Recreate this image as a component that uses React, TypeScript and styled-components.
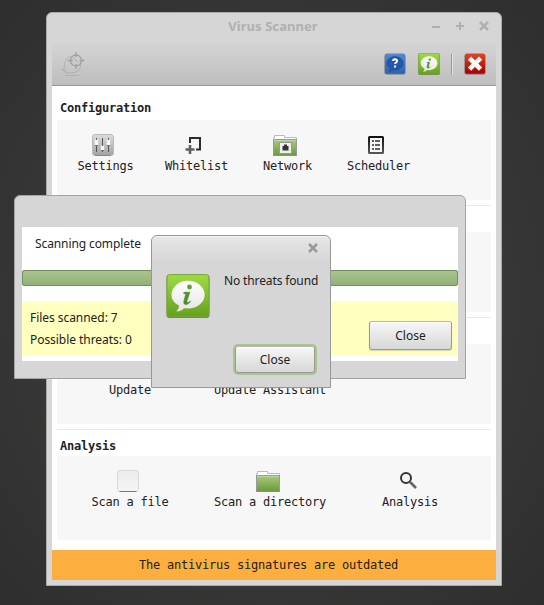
import React from 'react';
import styled, { createGlobalStyle } from 'styled-components';

const GlobalStyle = createGlobalStyle`
  * { box-sizing: border-box; }
  body { margin: 0; color: #222; background: #333; overflow: hidden; }
  svg { display: block; flex: none; }
`;

const Desktop = styled.main`
  position: relative;
  width: 544px;
  height: 605px;
  padding: 12px 0 0 46px;
  background: radial-gradient(ellipse at 50% 50%, #3c3c3b 35%, #2e2e2e 100%);
`;

const Window = styled.section`
  display: flex;
  flex-direction: column;
  width: 456px;
  height: 574px;
  padding: 0 5px 5px;
  border: 1px solid #aaa;
  border-radius: 6px 6px 0 0;
  background: #d6d6d6;
`;

const TitleBar = styled.header`
  display: grid;
  grid-template-columns: 77px 1fr 79px;
  align-items: center;
  height: 28px;
  padding-bottom: 2px;
  color: #b0b0b0;
`;

const WindowTitle = styled.h1`
  grid-column: 2;
  margin: 0;
  text-align: center;
  font: bold 13px/20px 'Noto Sans', sans-serif;
  letter-spacing: 0.06px;
`;

const WindowControls = styled.div`
  display: flex;
  gap: 12px;
  padding-left: 13px;
`;

const Toolbar = styled.div`
  display: flex;
  align-items: center;
  height: 45px;
  padding: 2px 10px 0 8px;
  border-bottom: 1px solid #999;
  background: linear-gradient(#d6d6d6, #d3d3d3 10%, #bebebe);
`;

const ToolbarActions = styled.div`
  display: flex;
  align-items: center;
  gap: 12px;
  margin-left: auto;
`;

const Separator = styled.i`
  width: 2px;
  height: 21px;
  border-left: 1px solid #999;
  background: #e2e2e2;
  margin: 0 -1px 0 -1px;
`;

const Content = styled.div`
  flex: 1;
  padding: 7px 5px 0;
  background: #fff;
`;

const Section = styled.section<{ $last?: boolean }>`
  height: ${p => (p.$last ? 111 : 107)}px;
  margin-bottom: 5px;
  & + & { box-shadow: 0 1px 0 #e9e9e9 inset; }
`;

const SectionTitle = styled.h2<{ $low?: boolean }>`
  height: 27px;
  margin: 0;
  padding: ${p => (p.$low ? 7 : 5)}px 0 0 3px;
  font: bold 12px/20px 'DejaVu Sans Mono', monospace;
  letter-spacing: -0.224px;
`;

const Panel = styled.div<{ $columns: number; $tall?: boolean }>`
  display: grid;
  grid-template-columns: repeat(${p => p.$columns}, ${p => (p.$columns === 4 ? 91 : 140)}px);
  height: ${p => (p.$tall ? 84 : 80)}px;
  padding: 13px 3px 0;
  background: #f7f7f7;
`;

const Launcher = styled.div`
  display: flex;
  flex-direction: column;
  align-items: center;
  gap: 1px;
  font: 12px/16px 'DejaVu Sans Mono', monospace;
  letter-spacing: -0.224px;
  white-space: nowrap;
  svg { margin-right: 5px; }
`;

const StatusBar = styled.footer`
  display: flex;
  align-items: center;
  height: 30px;
  padding-left: 87px;
  background: #fcae3e;
  font: 12px/16px 'DejaVu Sans Mono', monospace;
  letter-spacing: -0.224px;
`;

const ScanDialog = styled.section`
  position: absolute;
  left: 14px;
  top: 195px;
  width: 452px;
  height: 184px;
  padding: 31px 7px 17px;
  border: 1px solid #a3a3a3;
  border-radius: 6px 6px 0 0;
  background: #d6d6d6;
  font: 12px/22px 'Noto Sans', sans-serif;
  letter-spacing: -0.1px;
`;

const ScanBody = styled.div`
  height: 134px;
  background: #fff;
`;

const ScanStatus = styled.p`
  height: 43px;
  margin: 0;
  padding: 6px 13px 0;
`;

const Progress = styled.div`
  height: 16px;
  border: 1px solid #72905b;
  border-radius: 2px;
  background: linear-gradient(#a8c48d, #91b179);
`;

const Summary = styled.div`
  display: flex;
  justify-content: space-between;
  align-items: flex-start;
  height: 55px;
  margin-top: 15px;
  padding: 6px 6px 0 8px;
  background: #ffffbf;
  letter-spacing: -0.05px;
`;

const Button = styled.button<{ $focused?: boolean }>`
  width: ${p => (p.$focused ? 80 : 83)}px;
  height: ${p => (p.$focused ? 27 : 29)}px;
  padding: 0;
  border: 1px solid #999;
  border-radius: 3px;
  border-top-color: #b5b5b5;
  background: linear-gradient(#f7f7f7, #d7d7d7);
  box-shadow: ${p => (p.$focused ? '0 0 0 2px #a9c689, 0 1px 0 #fff inset' : '0 1px 1px #9996, 0 1px 0 #fff inset')};
  color: #222;
  font: 12px/20px 'Noto Sans', sans-serif;
`;

const ScanClose = styled.div`
  padding-top: 14px;
`;

const MessageDialog = styled.section`
  position: absolute;
  left: 151px;
  top: 235px;
  width: 180px;
  height: 153px;
  padding: 0 14px 14px;
  border: 1px solid #979797;
  border-radius: 6px 6px 0 0;
  background: linear-gradient(#e7e7e7, #d6d6d6 26px);
  box-shadow: 0 1px 0 #f5f5f5 inset;
  display: flex;
  flex-direction: column;
  font: 12px/20px 'Noto Sans', sans-serif;
  letter-spacing: -0.13px;
`;

const MessageBar = styled.div`
  display: flex;
  justify-content: flex-end;
  padding: 6px 0 0;
  margin-right: -3px;
  height: 38px;
  color: #999;
`;

const MessageContent = styled.div`
  display: flex;
  gap: 14px;
  align-items: flex-start;
  white-space: nowrap;
  span { margin-top: -3px; }
`;

const MessageActions = styled.div`
  display: flex;
  justify-content: flex-end;
  margin: auto 1px 0 0;
`;

type ControlKind = 'minimize' | 'maximize' | 'close';

const ControlIcon = ({ kind }: { kind: ControlKind }) => (
  <svg width="12" height="12" viewBox="0 0 12 12" fill="none" stroke="currentColor" strokeWidth="2">
    {kind === 'minimize' && <path d="M2 7h8" />}
    {kind === 'maximize' && <path d="M2 6h8M6 2v8" />}
    {kind === 'close' && <path strokeWidth="2.5" d="m2 2 8 8M10 2l-8 8" />}
  </svg>
);

const ScannerLogo = () => (
  <svg width="26" height="26" viewBox="0 0 26 26" fill="none" stroke="#a59f9f">
    <path strokeWidth=".8" stroke="#b0a9a9" d="M11 5.5C6.500 6 5 9 4.500 14L4 18.500M21 12.500c-.3 4-1.500 6.500-4 8-2.500 1.200-5.500 1.500-9 1.500L3 18l-1.500 1.200M5 24.500h14M3 19l4 4.500" />
    <circle cx="16" cy="9.500" r="5.500" strokeWidth="1.300" />
    <path strokeWidth="1.300" d="M16 1v5M16 13v5M7.500 9.500h5M19.500 9.500h5" />
    <path strokeWidth=".7" d="m13 7 5 4" />
  </svg>
);

const HelpIcon = () => (
  <svg width="22" height="22" viewBox="0 0 22 22">
    <defs><linearGradient id="blue" x2="0" y2="1"><stop stopColor="#5388d2" /><stop offset="1" stopColor="#2f62b0" /></linearGradient></defs>
    <rect x=".5" y="1" width="21" height="20.5" rx="2" fill="#69737f" />
    <rect x="1" y=".5" width="20" height="20" rx="2" fill="url(#blue)" />
    <path d="M6.5 15.2C4.4 14 3 12.2 3 10.2 3 6.4 6.6 3.7 11 3.7s8 2.7 8 6.5-3.6 6.6-8 6.6l-1.5-.1c-1.1.9-2.700 1.500-4.600 1.400 1.200-.7 1.700-1.600 1.600-2.900Z" fill="#2458a8" stroke="#1b498f" strokeWidth=".7" />
    <path d="M9.2 8V7Q9.8 6.2 11 6.2q2.1 0 2.1 1.7 0 1-1.1 1.6-.9.5-.9 1.6M11.1 12.6v2" fill="none" stroke="#fff" strokeWidth="1.9" />
  </svg>
);

const InfoIcon = ({ size, id }: { size: number; id: string }) => (
  <svg width={size} height={size} viewBox="0 0 44 44">
    <defs>
      <linearGradient id={id} x2="0" y2="1"><stop stopColor="#a0da44" /><stop offset="1" stopColor="#64a21b" /></linearGradient>
      <linearGradient id={`${id}-bubble`} x2="0" y2="1"><stop stopColor="#fff" /><stop offset="1" stopColor="#e5e5e5" /></linearGradient>
    </defs>
    <rect x=".5" y="1" width="43" height="43" rx="3" fill="#777c72" />
    <rect x="1" y=".6" width="42" height="42" rx="2.5" fill={`url(#${id})`} stroke="#75a83c" />
    <path d="M13 31.5C8 29 5.5 25 5.5 20.7c0-7.8 7.5-14 16.5-14s16.7 6.2 16.7 14S31 34.5 22 34.5l-4-.3c-2 2.4-5 3.400-8 3.100 2-1.200 3-3.200 3-5.800Z" fill={`url(#${id}-bubble)`} />
    <circle cx="23.5" cy="13" r="2.4" fill="#63a02d" />
    <path d="M18 18.3h5.8L21 26.600q-.6 2 .8 2 1.200 0 2.700-1.500-1.700 3.400-4.600 3.400-2.800 0-2-3.300l1.800-6.800q-.4-1-2-.8Z" fill="#508f27" stroke="#508f27" strokeWidth=".7" />
  </svg>
);

const QuitIcon = () => (
  <svg width="22" height="22" viewBox="0 0 22 22">
    <defs><linearGradient id="red" x2="0" y2="1"><stop stopColor="#e54420" /><stop offset="1" stopColor="#a80000" /></linearGradient></defs>
    <rect x=".5" y="1" width="21" height="20.5" rx="2" fill="#766" />
    <rect x="1" y=".5" width="20" height="20" rx="2" fill="url(#red)" />
    <path d="m5.500 5.200 11 11M16.500 5.200l-11 11" stroke="#fff" strokeWidth="4.6" />
  </svg>
);

const SettingsIcon = () => (
  <svg width="24" height="24" viewBox="0 0 24 24">
    <defs><linearGradient id="gray" x2="0" y2="1"><stop stopColor="#dcdcdc" /><stop offset="1" stopColor="#a2a2a2" /></linearGradient></defs>
    <rect x="1.5" y="1.5" width="21" height="21" rx="2.5" fill="url(#gray)" stroke="#bdbdbd" />
    <path d="M4 22.5h16" stroke="#888" />
    <path d="M5.500 5v14M11.500 5v14M17.500 5v14" stroke="#555" />
    <path d="M4 7h3v5H4zM10 13h3v4h-3zM16 7h3v5h-3z" fill="#fff" stroke="#eee" strokeWidth=".5" />
    <path d="M4 12.500h3M10 17.500h3M16 12.500h3" stroke="#777" />
  </svg>
);

const WhitelistIcon = () => (
  <svg width="24" height="24" viewBox="0 0 24 24" fill="none">
    <path d="M8 10V5H18V16.5H14" stroke="#2c2c2c" strokeWidth="2" />
    <path d="M8 12v9M3.5 16.5h9" stroke="#606060" strokeWidth="2.6" />
  </svg>
);

const FolderIcon = ({ id, network = false }: { id: string; network?: boolean }) => (
  <svg width="24" height="24" viewBox="0 0 24 24">
    <defs><linearGradient id={id} x2="0" y2="1"><stop stopColor="#a7cb7c" /><stop offset="1" stopColor="#6c993b" /></linearGradient></defs>
    <path d="M.5 22V4.500h1v-2h10v2h12V22" fill="#fff" stroke="#bbb" />
    <path d="M.5 6.500h23v16H.5z" fill={`url(#${id})`} stroke="#999" />
    <path d="M1.500 7.500h21" stroke="#bfd7a4" />
    <path d="M0 22.500h24" stroke="#8e8e8e" />
    {network && <g><path d="M6.500 9.500h12v11h-12z" fill="#eee" stroke="#999" /><path d="M9.500 17.500V13H11v-1.500h3V13h1.500v4.500z" fill="#333" /></g>}
  </svg>
);

const SchedulerIcon = () => (
  <svg width="24" height="24" viewBox="0 0 24 24" fill="none">
    <defs><linearGradient id="ink" x2="0" y2="1"><stop stopColor="#111" /><stop offset="1" stopColor="#555" /></linearGradient></defs>
    <rect x="5" y="4" width="14" height="16" rx=".5" fill="#f7f7f7" stroke="url(#ink)" strokeWidth="2" />
    <path d="M8 8h2M8 12h2M8 16h2M11 8h5M11 12h5M11 16h5" stroke="#333" strokeWidth="1.4" />
  </svg>
);

const FileIcon = () => (
  <svg width="24" height="24" viewBox="0 0 24 24">
    <defs><linearGradient id="paper" x2="0" y2="1"><stop stopColor="#ececec" /><stop offset="1" stopColor="#f5f5f5" /></linearGradient></defs>
    <rect x="1.500" y="1.500" width="21" height="21" rx="2.5" fill="url(#paper)" stroke="#d8d8d8" />
    <path d="M3.500 22.500h17" stroke="#777" />
  </svg>
);

const UpdateIcon = () => (
  <svg width="24" height="24" viewBox="0 0 24 24" fill="none" stroke="#444" strokeWidth="2">
    <path d="M12 4v12M7 11l5 5 5-5M5 19h14" />
  </svg>
);

const SearchIcon = () => (
  <svg width="24" height="24" viewBox="0 0 24 24" fill="none">
    <circle cx="10" cy="9" r="5" stroke="#333" strokeWidth="2" />
    <path d="m14 13 6 6" stroke="#666" strokeWidth="2.6" />
  </svg>
);

export default function App() {
  return (
    <>
      <GlobalStyle />
      <Desktop>
        <Window>
          <TitleBar>
            <WindowTitle>Virus Scanner</WindowTitle>
            <WindowControls>
              <ControlIcon kind="minimize" />
              <ControlIcon kind="maximize" />
              <ControlIcon kind="close" />
            </WindowControls>
          </TitleBar>
          <Toolbar>
            <ScannerLogo />
            <ToolbarActions>
              <HelpIcon />
              <InfoIcon size={22} id="toolbar-green" />
              <Separator />
              <QuitIcon />
            </ToolbarActions>
          </Toolbar>
          <Content>
            <Section>
              <SectionTitle>Configuration</SectionTitle>
              <Panel $columns={4}>
                <Launcher><SettingsIcon />Settings</Launcher>
                <Launcher><WhitelistIcon />Whitelist</Launcher>
                <Launcher><FolderIcon id="network-folder" network />Network</Launcher>
                <Launcher><SchedulerIcon />Scheduler</Launcher>
              </Panel>
            </Section>
            <Section>
              <SectionTitle />
              <Panel $columns={3} />
            </Section>
            <Section>
              <SectionTitle />
              <Panel $columns={3}>
                <Launcher><UpdateIcon />Update</Launcher>
                <Launcher><UpdateIcon />Update Assistant</Launcher>
              </Panel>
            </Section>
            <Section $last>
              <SectionTitle $low>Analysis</SectionTitle>
              <Panel $columns={3} $tall>
                <Launcher><FileIcon />Scan a file</Launcher>
                <Launcher><FolderIcon id="scan-folder" />Scan a directory</Launcher>
                <Launcher><SearchIcon />Analysis</Launcher>
              </Panel>
            </Section>
          </Content>
          <StatusBar>The antivirus signatures are outdated</StatusBar>
        </Window>
        <ScanDialog>
          <ScanBody>
            <ScanStatus>Scanning complete</ScanStatus>
            <Progress />
            <Summary>
              <div>
                <div>Files scanned: 7</div>
                <div>Possible threats: 0</div>
              </div>
              <ScanClose><Button>Close</Button></ScanClose>
            </Summary>
          </ScanBody>
        </ScanDialog>
        <MessageDialog>
          <MessageBar><ControlIcon kind="close" /></MessageBar>
          <MessageContent>
            <InfoIcon size={44} id="message-green" />
            <span>No threats found</span>
          </MessageContent>
          <MessageActions><Button $focused>Close</Button></MessageActions>
        </MessageDialog>
      </Desktop>
    </>
  );
}
